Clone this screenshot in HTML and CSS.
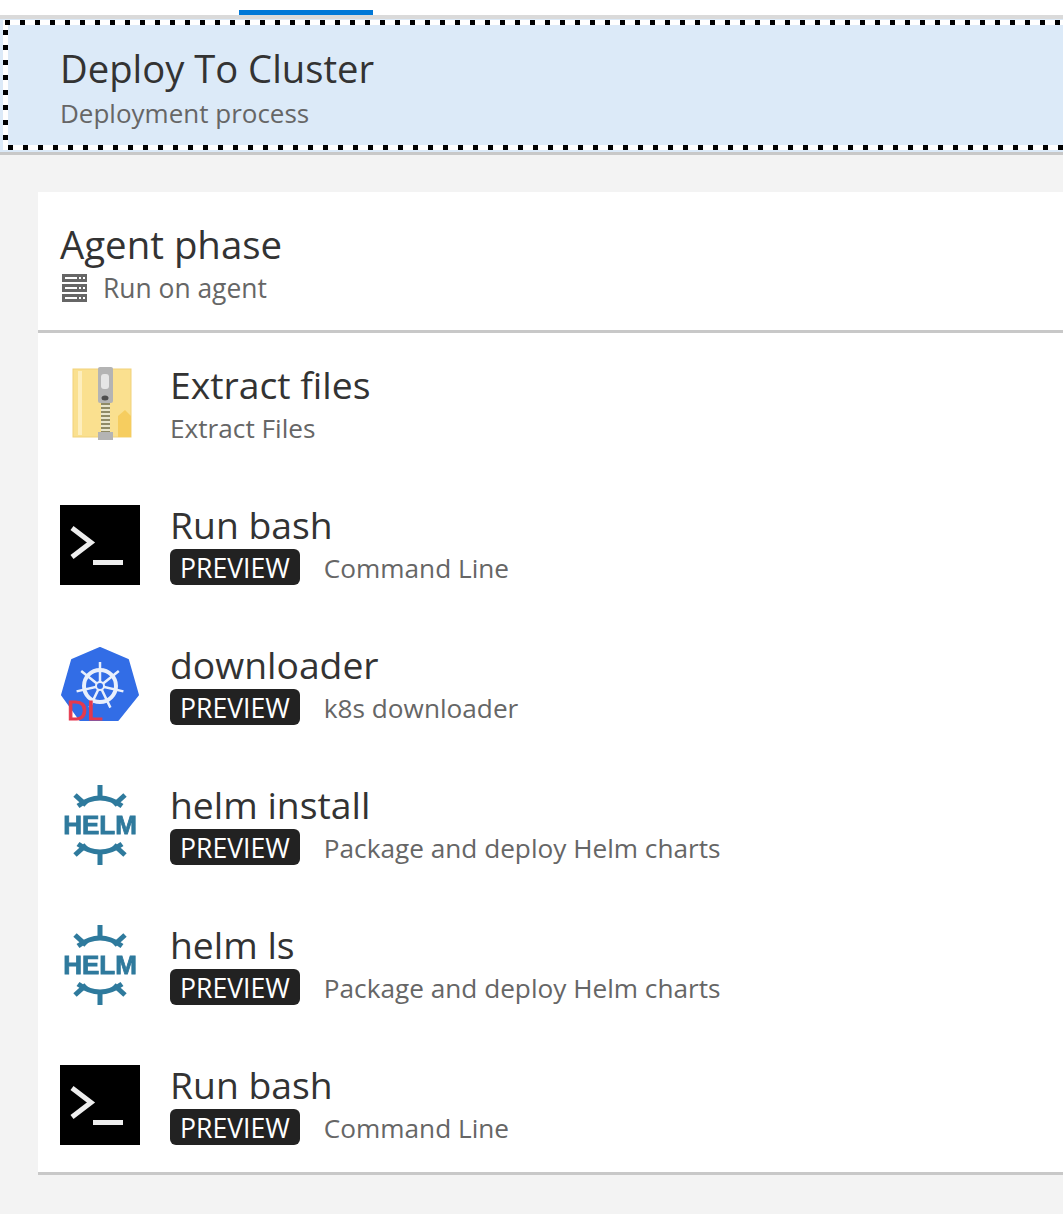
FILE: index.html
```html
<!DOCTYPE html>
<html>
<head>
    <title>Deploy To Cluster</title>
    <link rel="stylesheet" href="styles.css">
</head>
<body>
    <div class="tabBar"><div class="activeTab"></div></div>

    <div class="processHeader">
        <div class="processName">Deploy To Cluster</div>
        <div class="processSub">Deployment process</div>
    </div>

    <div class="phase">
        <div class="phaseHeader">
            <div class="phaseName">Agent phase</div>
            <div class="phaseSub">
                <svg class="serverIcon" width="25" height="28" viewBox="0 0 25 28">
                    <path fill="#666" d="M0 0h25v8H0zM0 10h25v8H0zM0 20h25v8H0z"/>
                    <path fill="#fff" d="M3 3h12v2H3zM17 3h2v2h-2zM21 3h2v2h-2zM3 13h12v2H3zM17 13h2v2h-2zM21 13h2v2h-2zM3 23h12v2H3zM17 23h2v2h-2zM21 23h2v2h-2z"/>
                </svg>
                <span>Run on agent</span>
            </div>
        </div>

        <div class="taskList">
            <div class="task">
                <svg class="taskIcon" width="80" height="80" viewBox="0 0 80 80">
                    <defs>
                        <filter id="soft"><feGaussianBlur stdDeviation="0.7"/></filter>
                    </defs>
                    <g filter="url(#soft)">
                        <rect x="13" y="4" width="58" height="68" fill="#fae08f" stroke="#f1d27a"/>
                        <rect x="18" y="6" width="4" height="64" fill="#fdeebd"/>
                        <path d="M58 72V51l7-6 6 6v21z" fill="#f6cd5e"/>
                        <rect x="38" y="2" width="15" height="36" rx="2" fill="#b4b4b4"/>
                        <rect x="41" y="9" width="8" height="15" rx="3" fill="#e6e6e6"/>
                        <ellipse cx="45" cy="33" rx="3.5" ry="2.5" fill="#4d4d4d"/>
                        <rect x="41" y="38" width="9" height="30" fill="#8f8a66"/>
                        <path d="M41 41h9M41 45h9M41 49h9M41 53h9M41 57h9M41 61h9M41 65h9" stroke="#e8e5cd" stroke-width="2"/>
                        <rect x="38" y="67" width="15" height="8" fill="#b4b4b4"/>
                    </g>
                </svg>
                <div>
                    <div class="taskName">Extract files</div>
                    <div class="taskSub"><span>Extract Files</span></div>
                </div>
            </div>

            <div class="task">
                <svg class="taskIcon" width="80" height="80" viewBox="0 0 80 80">
                    <g id="terminalMark">
                        <rect width="80" height="80" fill="#000"/>
                        <path d="M12 23l19 14.500L12 52" fill="none" stroke="#eee" stroke-width="5"/>
                        <rect x="33" y="55" width="30" height="5" fill="#eee"/>
                    </g>
                </svg>
                <div>
                    <div class="taskName">Run bash</div>
                    <div class="taskSub"><span class="previewBadge">PREVIEW</span><span>Command Line</span></div>
                </div>
            </div>

            <div class="task">
                <svg class="taskIcon" width="80" height="80" viewBox="0 0 80 80">
                    <g filter="url(#soft)">
                        <path d="M40 3l28 12 10 35-20 25H20L2 50l10-35z" fill="#326de6" stroke="#326de6" stroke-width="2" stroke-linejoin="round"/>
                        <g fill="none" stroke="#e8effc">
                            <circle cx="40" cy="41" r="16" stroke-width="4"/>
                            <path stroke-width="2.500" d="M40 41V17M40 41L58.800 26M40 41L63.400 46.400M40 41L50.400 62.600M40 41L29.600 62.600M40 41L16.600 46.400M40 41L21.200 26"/>
                        </g>
                        <circle cx="40" cy="41" r="4" fill="#326de6" stroke="#e8effc" stroke-width="2"/>
                        <text class="dlMark" x="7" y="75">DL</text>
                    </g>
                </svg>
                <div>
                    <div class="taskName">downloader</div>
                    <div class="taskSub"><span class="previewBadge">PREVIEW</span><span>k8s downloader</span></div>
                </div>
            </div>

            <div class="task">
                <svg class="taskIcon" width="80" height="80" viewBox="0 0 80 80">
                    <g id="helmMark" filter="url(#soft)">
                        <g fill="none" stroke="#2f7a9d" stroke-width="5">
                            <path d="M18 21Q40 5 62 21M18 59Q40 75 62 59"/>
                            <path d="M40 0v13M40 67v13M15 10l11 10M65 10L54 20M15 70l11-10M65 70L54 60"/>
                        </g>
                        <text class="helmMarkText" x="40" y="49">HELM</text>
                    </g>
                </svg>
                <div>
                    <div class="taskName">helm install</div>
                    <div class="taskSub"><span class="previewBadge">PREVIEW</span><span>Package and deploy Helm charts</span></div>
                </div>
            </div>

            <div class="task">
                <svg class="taskIcon" width="80" height="80" viewBox="0 0 80 80">
                    <use href="#helmMark"/>
                </svg>
                <div>
                    <div class="taskName">helm ls</div>
                    <div class="taskSub"><span class="previewBadge">PREVIEW</span><span>Package and deploy Helm charts</span></div>
                </div>
            </div>

            <div class="task">
                <svg class="taskIcon" width="80" height="80" viewBox="0 0 80 80">
                    <use href="#terminalMark"/>
                </svg>
                <div>
                    <div class="taskName">Run bash</div>
                    <div class="taskSub"><span class="previewBadge">PREVIEW</span><span>Command Line</span></div>
                </div>
            </div>
        </div>
    </div>
</body>
</html>
```
FILE: styles.css
```css
html, body {
    margin: 0;
    height: 100%;
}

body {
    font-family: "Open Sans", "Noto Sans", sans-serif;
    background-color: #f3f3f3;
    color: #333;
    overflow: hidden;
}

.tabBar {
    height: 15px;
    padding-left: 239px;
    background-color: #fff;
    border-bottom: 4px solid #dadada;
    display: flex;
    align-items: flex-end;
}

.activeTab {
    width: 134px;
    height: 5px;
    background-color: #0078d7;
}

.processHeader {
    position: relative;
    height: 136px;
    box-sizing: border-box;
    padding: 26px 0 0 60px;
    background-color: #dceaf8;
    border-bottom: 3px solid #c8c8c8;
}

/* focus rectangle, white underlay with black square dots */
.processHeader::after {
    content: "";
    position: absolute;
    top: 1px;
    left: 3px;
    right: 0;
    bottom: 2px;
    background-image:
        linear-gradient(90deg, #000 5px, #fff 5px),
        linear-gradient(90deg, #000 5px, #fff 5px),
        linear-gradient(180deg, #000 5px, #fff 5px);
    background-size: 15px 5px, 15px 5px, 5px 15px;
    background-position: 2px 0, 5px 100%, 0 10px;
    background-repeat: repeat-x, repeat-x, repeat-y;
}

.processName {
    font-size: 38.200px;
    line-height: 46px;
}

.processSub {
    font-size: 26px;
    line-height: 34px;
    margin-top: 5px;
    color: #666;
}

.phase {
    margin: 37px 0 0 38px;
    height: 983px;
    box-sizing: border-box;
    background-color: #fff;
    border-bottom: 3px solid #c8c8c8;
}

.phaseHeader {
    height: 141px;
    box-sizing: border-box;
    padding: 29px 0 0 22px;
    border-bottom: 3px solid #c8c8c8;
}

.phaseName {
    font-size: 38.400px;
    line-height: 46px;
    margin-bottom: 1px;
}

.phaseSub {
    display: flex;
    align-items: center;
    gap: 16px;
    font-size: 26.400px;
    line-height: 40px;
    color: #666;
}

.serverIcon {
    margin-left: 2px;
}

.taskList {
    padding-top: 2px;
}

.task {
    display: flex;
    align-items: flex-start;
    height: 110px;
    padding: 30px 0 0 22px;
}

.taskIcon {
    flex: none;
    margin-right: 30px;
}

.taskName {
    font-size: 37.300px;
    line-height: 40px;
    margin-bottom: 4px;
}

.taskSub {
    display: flex;
    font-size: 26.200px;
    line-height: 38px;
    color: #666;
}

.previewBadge {
    background-color: #222;
    color: #fff;
    height: 34px;
    font-size: 26.600px;
    line-height: 34px;
    padding: 2px 10px 0;
    margin-right: 24px;
    border-radius: 6px;
}

.dlMark {
    font-family: "Liberation Sans", sans-serif;
    font-size: 28px;
    fill: #e53a4e;
    stroke: #e53a4e;
    stroke-width: 1px;
}

.helmMarkText {
    font-family: "Liberation Sans", sans-serif;
    font-weight: bold;
    font-size: 26px;
    text-anchor: middle;
    fill: #2f7a9d;
    stroke: #2f7a9d;
    stroke-width: 0.800px;
}
```
